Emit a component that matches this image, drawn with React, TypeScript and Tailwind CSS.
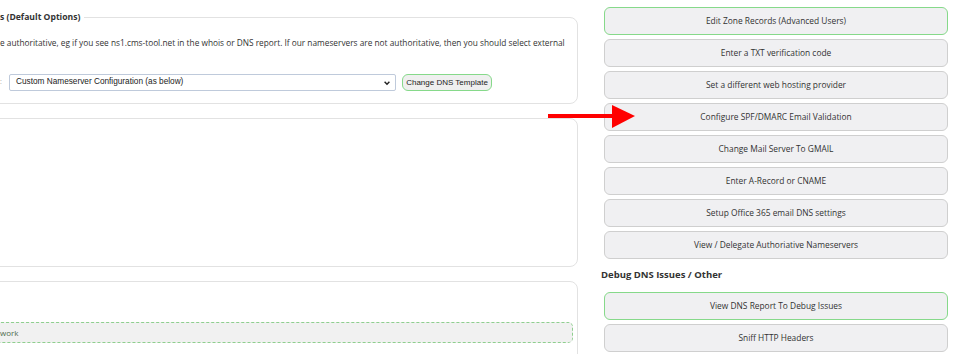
import { ReactNode } from 'react'

const openSans = { fontFamily: '"Open Sans", "Noto Sans", sans-serif' }

function ActionButton({ children, green }: { children: ReactNode; green?: boolean }) {
  return (
    <button
      className={
        green
          ? 'h-[28px] w-full rounded-[6px] border border-[#86d98a] bg-[#f0f0f2] text-[8.4px] text-[#333]'
          : 'h-[28px] w-full rounded-[6px] border border-[#cfcfcf] bg-[#f0f0f2] text-[8.4px] text-[#333]'
      }
    >
      {children}
    </button>
  )
}

export default function App() {
  return (
    <div className="relative flex h-[354px] w-[960px] overflow-hidden bg-white" style={openSans}>
      {/* left column, scrolled so its left edge is off screen */}
      <div className="w-[578px] shrink-0 overflow-hidden">
        <fieldset className="-ml-[20px] mt-[10px] w-[598px] rounded-lg border border-[#e2e2e2] pb-[12px] pl-[19px] pr-3">
          <legend className="pr-1 text-[8.6px] font-bold leading-[14px] text-[#333]">s (Default Options)</legend>
          <p className="mt-[12px] whitespace-nowrap text-[8.3px] leading-[14px] text-[#333]">
            e authoritative, eg if you see ns1.cms-tool.net in the whois or DNS report. If our nameservers are not
            authoritative, then you should select external
          </p>
          <div className="mt-[24px] flex h-[17px] items-center">
            <span className="w-[9px] text-[7px] text-[#aaa]">:</span>
            <div
              className="flex h-[17px] w-[387px] items-center justify-between rounded-[2px] border border-[#bfcadb] bg-white pl-[6px] pr-[4px] text-[8.25px] text-[#222]"
              style={{ fontFamily: '"Liberation Sans", Arial, sans-serif' }}
            >
              <span>Custom Nameserver Configuration (as below)</span>
              <svg width="8" height="8" viewBox="0 0 10 10">
                <path d="M2 3.5 L5 6.5 L8 3.5" fill="none" stroke="#222" strokeWidth="1.8" />
              </svg>
            </div>
            <button
              className="ml-[6px] h-[17px] w-[90px] rounded-[6px] border border-[#86d98a] bg-[#efefef] text-[8px] text-[#222]"
              style={{ fontFamily: '"Liberation Sans", Arial, sans-serif' }}
            >
              Change DNS Template
            </button>
          </div>
        </fieldset>

        <div className="-ml-[20px] mt-[14px] h-[149px] w-[598px] rounded-lg border border-[#e2e2e2]" />

        <div className="-ml-[20px] mt-[14px] h-[120px] w-[598px] rounded-lg border border-[#e2e2e2] pr-[4px] pt-[40px]">
          <div className="flex h-[21px] items-center rounded-[5px] border border-dashed border-[#8fcf8f] bg-[#f1f1f1] pl-[18px] text-[8px] text-[#4f6b4f]">
            work
          </div>
        </div>
      </div>

      {/* right column */}
      <div className="ml-[26px] flex w-[344px] shrink-0 flex-col pt-[7px]">
        <div className="flex flex-col gap-[4px]">
          <ActionButton green>Edit Zone Records (Advanced Users)</ActionButton>
          <ActionButton>Enter a TXT verification code</ActionButton>
          <ActionButton>Set a different web hosting provider</ActionButton>
          <ActionButton>Configure SPF/DMARC Email Validation</ActionButton>
          <ActionButton>Change Mail Server To GMAIL</ActionButton>
          <ActionButton>Enter A-Record or CNAME</ActionButton>
          <ActionButton>Setup Office 365 email DNS settings</ActionButton>
          <ActionButton>View / Delegate Authoriative Nameservers</ActionButton>
        </div>
        <h3 className="-ml-[3px] mt-[9px] text-[9.5px] font-bold leading-[14px] text-[#333]">Debug DNS Issues / Other</h3>
        <div className="mt-[10px] flex flex-col gap-[4px]">
          <ActionButton green>View DNS Report To Debug Issues</ActionButton>
          <ActionButton>Sniff HTTP Headers</ActionButton>
        </div>
      </div>

      {/* annotation arrow lying over the page */}
      <svg className="absolute left-[546px] top-[103px]" width="92" height="28" viewBox="0 0 92 28">
        <rect x="2" y="11" width="66" height="4" fill="#ff0000" />
        <polygon points="66,2 89,13 66,25" fill="#ff0000" />
      </svg>
    </div>
  )
}
